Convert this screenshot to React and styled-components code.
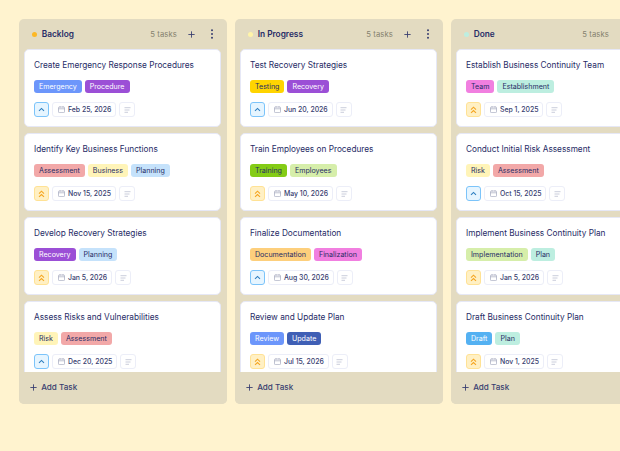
import React from "react";
import styled, { createGlobalStyle } from "styled-components";

const Global = createGlobalStyle`
  html, body { margin: 0; padding: 0; width: 620px; height: 451px; overflow: hidden; background: #fff3cf; }
  body { font-family: "Inter", "Noto Sans", sans-serif; color: #272c66; }
  * { box-sizing: border-box; }
`;

const Board = styled.div`
  display: flex; gap: 7.7px; padding: 19px 0 0 18.7px; width: 620px; height: 451px; overflow: hidden;
`;
const Column = styled.section`
  flex: 0 0 208.3px; height: 385px; display: flex; flex-direction: column;
  background: #e3dbc1; border-radius: 5px; overflow: hidden;
`;
const Header = styled.header`
  flex: 0 0 30px; display: flex; align-items: center; padding: 0 10px 0 13px;
`;
const Dot = styled.span`
  width: 5px; height: 5px; border-radius: 50%; background: ${p => p.$color}; margin-right: 5px;
`;
const ColTitle = styled.h2`
  margin: 0; font-size: 8.3px; font-weight: 600; color: #272c66; flex: 1;
`;
const Count = styled.span`
  font-size: 7.7px; color: #85826f; letter-spacing: .1px; margin-right: 10px; white-space: nowrap;
`;
const HeaderBtn = styled.span`
  display: flex; width: 10px; height: 10px; align-items: center; justify-content: center; margin-left: ${p => p.$ml || 0}px;
`;
const List = styled.div`
  flex: 1; min-height: 0; overflow: hidden; display: flex; flex-direction: column; gap: 6px; padding: 0 6px 0 5.3px;
`;
const Card = styled.article`
  flex: 0 0 78px; background: #fff; border: 1px solid #e6e8f6; border-radius: 5px; padding: 9px 9px 0 9px;
`;
const CardTitle = styled.h3`
  margin: 0; font-size: 8.25px; line-height: 12px; font-weight: 400; color: #272c66; white-space: nowrap;
`;
const Tags = styled.div`
  display: flex; gap: 3px; margin-top: 8.5px;
`;
const Tag = styled.span`
  height: 13px; line-height: 13px; padding: 0 5px; border-radius: 3px; font-size: 7.1px;
  background: ${p => p.$bg}; color: ${p => p.$fg || "#272c66"}; white-space: nowrap;
`;
const Meta = styled.div`
  display: flex; gap: 3px; margin-top: 9.5px;
`;
const Priority = styled.span`
  width: 15px; height: 15px; border-radius: 3px; display: flex; align-items: center; justify-content: center;
  background: ${p => p.$high ? "#fff0c4" : "#e6f5ff"};
  border: 1px solid ${p => p.$high ? "#ffe295" : "#7cc4fa"};
`;
const DateChip = styled.span`
  height: 15px; display: flex; align-items: center; gap: 3px; padding: 0 4px 0 5px;
  border: 1px solid #eceef8; border-radius: 3px; font-size: 6.9px; font-weight: 500; color: #383e70; white-space: nowrap;
`;
const NoteChip = styled.span`
  width: 16px; height: 15px; display: flex; align-items: center; justify-content: center;
  border: 1px solid #eceef8; border-radius: 3px;
`;
const Footer = styled.footer`
  flex: 0 0 32px; display: flex; align-items: center; gap: 4.5px; padding: 0 0 2px 11px;
  background: #e3dbc1; font-size: 8.1px; font-weight: 500; color: #383e70;
`;

const Plus = ({ c = "#383e70", s = 7 }) => (
  <svg width={s} height={s} viewBox="0 0 8 8" fill="none" stroke={c} strokeWidth="1"><path d="M4 .4v7.2M.4 4h7.2" /></svg>
);
const Kebab = () => (
  <svg width="4" height="10" viewBox="0 0 4 10" fill="#383e70"><circle cx="2" cy="1.2" r="1" /><circle cx="2" cy="5" r="1" /><circle cx="2" cy="8.8" r="1" /></svg>
);
const Up = () => (
  <svg width="7" height="5" viewBox="0 0 7 5" fill="none" stroke="#2f7fc0" strokeWidth="1.1"><path d="M1 3.8 3.5 1.4 6 3.8" /></svg>
);
const DoubleUp = () => (
  <svg width="7" height="8" viewBox="0 0 7 8" fill="none" stroke="#f5a623" strokeWidth="1.1"><path d="M1 3.6 3.5 1.2 6 3.6M1 6.9 3.5 4.5 6 6.9" /></svg>
);
const Cal = () => (
  <svg width="7" height="7" viewBox="0 0 7 7" fill="none" stroke="#a3a7bd" strokeWidth=".7"><rect x=".5" y="1" width="6" height="5.6" rx=".8" /><path d="M.5 2.8h6M2 .2v1.3M5 .2v1.3" /></svg>
);
const Lines = () => (
  <svg width="7" height="6" viewBox="0 0 7 6" fill="none" stroke="#bcc0d2" strokeWidth=".8"><path d="M.5.7h6M.5 3h5M.5 5.3h3.5" /></svg>
);

const c = {
  blue: ["#6c96fb", "#fff"], purple: ["#9b4fd6", "#fff"], yellow: ["#ffd400"], pink: ["#f17fe0"],
  mint: ["#bdeee0"], red: ["#f2a8a8"], cream: ["#fff4b8"], sky: ["#c5e2fb"], green: ["#84cc16"],
  lime: ["#d6eeaa"], orange: ["#fdcf7c"], navy: ["#3f5fb5", "#fff"], cyan: ["#54b1f2", "#fff"],
};

const cols = [
  { name: "Backlog", dot: "#fdb825", cards: [
    ["Create Emergency Response Procedures", [["Emergency", c.blue], ["Procedure", c.purple]], 0, "Feb 25, 2026"],
    ["Identify Key Business Functions", [["Assessment", c.red], ["Business", c.cream], ["Planning", c.sky]], 1, "Nov 15, 2025"],
    ["Develop Recovery Strategies", [["Recovery", c.purple], ["Planning", c.sky]], 1, "Jan 5, 2026"],
    ["Assess Risks and Vulnerabilities", [["Risk", c.cream], ["Assessment", c.red]], 0, "Dec 20, 2025"],
  ]},
  { name: "In Progress", dot: "#fff4a8", cards: [
    ["Test Recovery Strategies", [["Testing", c.yellow], ["Recovery", c.purple]], 0, "Jun 20, 2026"],
    ["Train Employees on Procedures", [["Training", c.green], ["Employees", c.lime]], 1, "May 10, 2026"],
    ["Finalize Documentation", [["Documentation", c.orange], ["Finalization", c.pink]], 0, "Aug 30, 2026"],
    ["Review and Update Plan", [["Review", c.blue], ["Update", c.navy]], 1, "Jul 15, 2026"],
  ]},
  { name: "Done", dot: "#bdeee0", cards: [
    ["Establish Business Continuity Team", [["Team", c.pink], ["Establishment", c.mint]], 1, "Sep 1, 2025"],
    ["Conduct Initial Risk Assessment", [["Risk", c.cream], ["Assessment", c.red]], 0, "Oct 15, 2025"],
    ["Implement Business Continuity Plan", [["Implementation", c.lime], ["Plan", c.mint]], 1, "Jan 5, 2026"],
    ["Draft Business Continuity Plan", [["Draft", c.cyan], ["Plan", c.mint]], 1, "Nov 1, 2025"],
  ]},
];

export default function App() {
  return (
    <>
      <Global />
      <Board>
        {cols.map(col => (
          <Column key={col.name}>
            <Header>
              <Dot $color={col.dot} />
              <ColTitle>{col.name}</ColTitle>
              <Count>5 tasks</Count>
              <HeaderBtn><Plus /></HeaderBtn>
              <HeaderBtn $ml={10}><Kebab /></HeaderBtn>
            </Header>
            <List>
              {col.cards.map(([title, tags, high, date]) => (
                <Card key={title}>
                  <CardTitle>{title}</CardTitle>
                  <Tags>
                    {tags.map(([t, [bg, fg]]) => <Tag key={t} $bg={bg} $fg={fg}>{t}</Tag>)}
                  </Tags>
                  <Meta>
                    <Priority $high={!!high}>{high ? <DoubleUp /> : <Up />}</Priority>
                    <DateChip><Cal />{date}</DateChip>
                    <NoteChip><Lines /></NoteChip>
                  </Meta>
                </Card>
              ))}
            </List>
            <Footer><Plus />Add Task</Footer>
          </Column>
        ))}
      </Board>
    </>
  );
}
